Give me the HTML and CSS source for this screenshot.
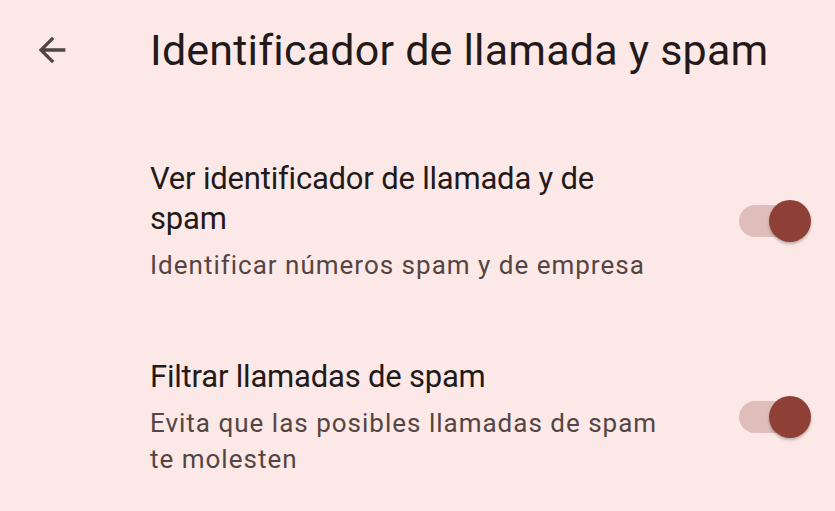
FILE: index.html
```html
<!DOCTYPE html>
<html lang="es">
<head>
<meta charset="utf-8">
<link rel="stylesheet" href="styles.css">
</head>
<body>
<div class="screen">
  <header class="appbar">
    <div class="back">
      <svg width="40" height="40" viewBox="0 0 24 24"><path d="M20 11H7.83l5.59-5.59L12 4l-8 8 8 8 1.41-1.41L7.83 13H20v-2z" fill="#4f4543"/></svg>
    </div>
    <h1 class="title">Identificador de llamada y spam</h1>
  </header>
  <div class="item item-first">
    <div class="texts">
      <div class="item-title">Ver identificador de llamada y de spam</div>
      <div class="item-sub">Identificar números spam y de empresa</div>
    </div>
    <div class="switch"><div class="track"></div><div class="thumb"></div></div>
  </div>
  <div class="item item-second">
    <div class="texts">
      <div class="item-title">Filtrar llamadas de spam</div>
      <div class="item-sub">Evita que las posibles llamadas de spam te molesten</div>
    </div>
    <div class="switch"><div class="track"></div><div class="thumb"></div></div>
  </div>
</div>
</body>
</html>
```
FILE: styles.css
```css
html, body {
  margin: 0;
  padding: 0;
  background: #fce9e7;
}
.screen {
  width: 835px;
  height: 511px;
  overflow: hidden;
  font-family: Roboto, "Noto Sans", sans-serif;
  color: #231918;
}
.appbar {
  display: flex;
  align-items: center;
  height: 100px;
}
.back {
  width: 40px;
  height: 40px;
  margin-left: 32px;
  margin-right: 78px;
  display: flex;
}
.title {
  margin: 0;
  font-weight: 400;
  font-size: 43px;
  letter-spacing: 0.2px;
  color: #231918;
}
.item {
  display: flex;
  align-items: center;
  padding-left: 150px;
}
.item-first {
  margin-top: 59px;
}
.item-second {
  margin-top: 74px;
}
.texts {
  width: 508px;
}
.item-title {
  font-size: 31px;
  line-height: 40px;
  letter-spacing: -0.2px;
  color: #231918;
}
.item-sub {
  font-size: 26px;
  line-height: 36px;
  letter-spacing: 1px;
  margin-top: 8px;
  color: #544543;
}
.switch {
  position: relative;
  width: 74px;
  height: 44px;
  margin-left: auto;
  margin-right: 22px;
  display: flex;
  align-items: center;
}
.track {
  width: 62px;
  height: 32px;
  border-radius: 16px;
  background: #dfbdba;
}
.thumb {
  position: absolute;
  right: 2px;
  top: 1px;
  width: 42px;
  height: 42px;
  border-radius: 50%;
  background: #8e3f36;
  box-shadow: 0 2px 3px rgba(0,0,0,0.25);
}
```
